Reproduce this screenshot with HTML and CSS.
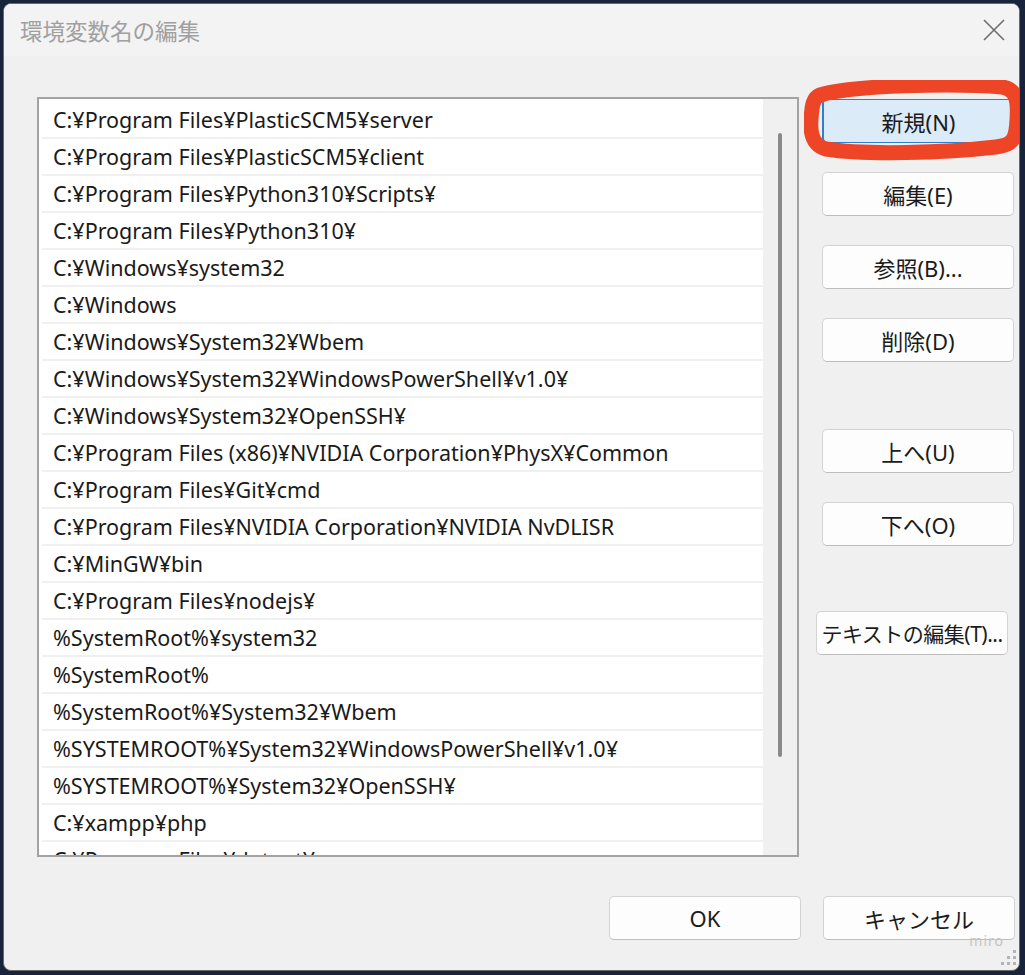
FILE: index.html
```html
<!DOCTYPE html>
<html lang="ja">
<head>
  <meta charset="UTF-8">
  <title>環境変数名の編集</title>
  <link rel="stylesheet" href="styles.css">
</head>
<body>
  <div class="dialog">
    <!-- Title bar -->
    <div class="titlebar">
      <span class="title">環境変数名の編集</span>
      <svg class="close" width="22" height="22" viewBox="0 0 22 22">
        <path d="M1 1 L21 21 M21 1 L1 21" stroke="#6e6e6e" stroke-width="1.6" fill="none"/>
      </svg>
    </div>

    <div class="main">
      <div class="list">
        <div class="rows">
          <div class="row">C:¥Program Files¥PlasticSCM5¥server</div>
          <div class="row">C:¥Program Files¥PlasticSCM5¥client</div>
          <div class="row">C:¥Program Files¥Python310¥Scripts¥</div>
          <div class="row">C:¥Program Files¥Python310¥</div>
          <div class="row">C:¥Windows¥system32</div>
          <div class="row">C:¥Windows</div>
          <div class="row">C:¥Windows¥System32¥Wbem</div>
          <div class="row">C:¥Windows¥System32¥WindowsPowerShell¥v1.0¥</div>
          <div class="row">C:¥Windows¥System32¥OpenSSH¥</div>
          <div class="row">C:¥Program Files (x86)¥NVIDIA Corporation¥PhysX¥Common</div>
          <div class="row">C:¥Program Files¥Git¥cmd</div>
          <div class="row">C:¥Program Files¥NVIDIA Corporation¥NVIDIA NvDLISR</div>
          <div class="row">C:¥MinGW¥bin</div>
          <div class="row">C:¥Program Files¥nodejs¥</div>
          <div class="row">%SystemRoot%¥system32</div>
          <div class="row">%SystemRoot%</div>
          <div class="row">%SystemRoot%¥System32¥Wbem</div>
          <div class="row">%SYSTEMROOT%¥System32¥WindowsPowerShell¥v1.0¥</div>
          <div class="row">%SYSTEMROOT%¥System32¥OpenSSH¥</div>
          <div class="row">C:¥xampp¥php</div>
          <div class="row">C:¥Program Files¥dotnet¥</div>
        </div>
        <div class="scrollbar">
          <div class="thumb"></div>
        </div>
      </div>

      <div class="actions">
        <div class="marked">
          <button class="btn btn-default">新規(N)</button>
          <!-- red hand-drawn marker -->
          <svg class="marker" width="224" height="84" viewBox="0 0 224 84">
            <path d="M16 15 C50 5 150 3 198 7 C214 9 214 24 213 40 C212 58 210 65 192 67 C140 73 60 75 22 69 C8 65 6 53 7 39 C8 25 9 18 16 15 Z"
                  stroke="#ee4526" stroke-width="15" fill="none" stroke-linejoin="round"/>
          </svg>
        </div>
        <button class="btn">編集(E)</button>
        <button class="btn">参照(B)...</button>
        <button class="btn">削除(D)</button>
        <button class="btn btn-gap">上へ(U)</button>
        <button class="btn">下へ(O)</button>
        <button class="btn btn-gap btn-text">テキストの編集(T)...</button>
      </div>
    </div>

    <div class="footer">
      <button class="btn">OK</button>
      <button class="btn">キャンセル</button>
    </div>

    <div class="watermark">miro</div>
    <svg class="grip" width="16" height="16" viewBox="0 0 16 16">
      <rect x="12" y="0" width="3" height="3" fill="#b4b4b4"/>
      <rect x="6" y="6" width="3" height="3" fill="#b4b4b4"/>
      <rect x="12" y="6" width="3" height="3" fill="#b4b4b4"/>
      <rect x="0" y="12" width="3" height="3" fill="#b4b4b4"/>
      <rect x="6" y="12" width="3" height="3" fill="#b4b4b4"/>
      <rect x="12" y="12" width="3" height="3" fill="#b4b4b4"/>
    </svg>
  </div>
</body>
</html>
```

FILE: styles.css
```css
/* Desktop behind the dialog */
body {
  margin: 0;
  padding: 3px 0 0 3px;
  background: #18243c;
  font-family: "Noto Sans", "Noto Sans CJK JP", sans-serif;
  color: #1b1b1b;
  overflow: hidden;
}

.dialog {
  position: relative;
  width: 1017px;
  height: 968px;
  box-sizing: border-box;
  border: 1px solid #6a6a6a;
  border-radius: 8px;
  background: #f0f0f0;
  overflow: hidden;
}

/* Title bar */
.titlebar {
  height: 52px;
  display: flex;
  align-items: center;
  justify-content: space-between;
  padding: 0 14px 0 16px;
  background: #f3f3f3;
}

.title {
  font-family: "Noto Sans CJK JP", sans-serif;
  font-size: 22.5px;
  color: #a0a0a0;
}

/* List + buttons */
.main {
  display: flex;
  gap: 23px;
  margin-top: 41px;
  padding-left: 33px;
}

.list {
  width: 762px;
  height: 760px;
  box-sizing: border-box;
  border: 2px solid #a3a3a3;
  background: #fff;
  display: flex;
  padding: 3px 0 0 3px;
}

.rows {
  flex: 1;
  overflow: hidden;
}

.row {
  height: 35px;
  line-height: 35px;
  border-bottom: 2px solid #f0f0f0;
  padding-left: 11px;
  font-size: 21.5px;
  white-space: nowrap;
  color: #1a1a1a;
}

.scrollbar {
  width: 34px;
  margin-top: -3px;
  background: #f0f0f0;
}

.thumb {
  width: 4px;
  height: 624px;
  margin: 34px 0 0 15px;
  border-radius: 2px;
  background: #8a8a8a;
}

.actions {
  display: flex;
  flex-direction: column;
  padding-top: 2px;
  width: 192px;
}

.btn {
  width: 192px;
  height: 44px;
  box-sizing: border-box;
  border: 1px solid #d3d3d3;
  border-bottom-color: #bdbdbd;
  border-radius: 5px;
  background: #fdfdfd;
  font-family: "Noto Sans", "Noto Sans CJK JP", sans-serif;
  font-size: 22px;
  color: #1b1b1b;
  padding: 0;
}

.actions .btn + .btn,
.marked + .btn {
  margin-top: 29px;
}

.actions .btn.btn-gap {
  margin-top: 67px;
}

.actions .btn.btn-text {
  margin-top: 65px;
  margin-left: -6px;
  font-size: 21px;
  letter-spacing: -0.5px;
}

.btn-default {
  background: #dcebf8;
  border: 1px solid #2f7fd0;
  border-left-width: 2px;
}

.marked {
  position: relative;
}

.marker {
  position: absolute;
  left: -18px;
  top: -19px;
}

/* Bottom buttons */
.footer {
  display: flex;
  justify-content: flex-end;
  gap: 22px;
  margin-top: 39px;
  padding-right: 4px;
}

.watermark {
  position: absolute;
  right: 15px;
  bottom: 20px;
  font-family: "Noto Sans", sans-serif;
  font-size: 14px;
  letter-spacing: 1px;
  color: #c4c4c4;
}

.grip {
  position: absolute;
  right: 2px;
  bottom: 4px;
}
```
